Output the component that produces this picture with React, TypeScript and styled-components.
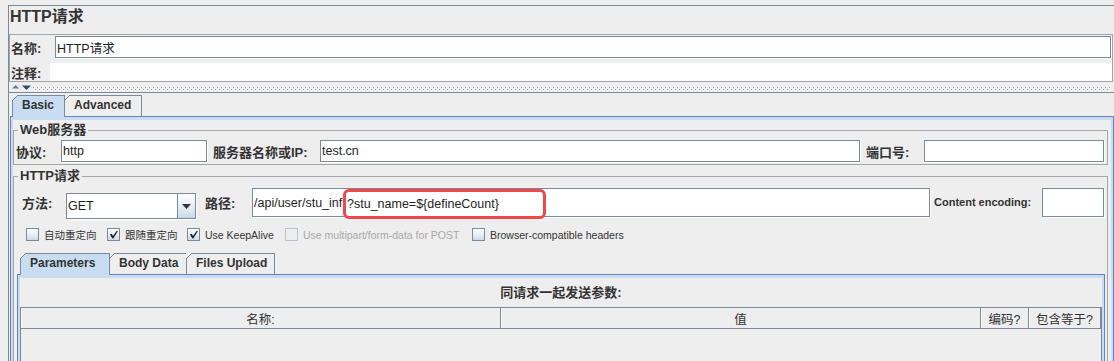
import React from "react";
import styled, { createGlobalStyle, css } from "styled-components";

const C = {
  bg: "#eeeeee",
  line: "#7a8a99",
  group: "#a6a6a6",
  blue: "#6382bf",
  band: "#c8ddf2",
  text: "#333333",
  field: "#1e1e1e",
  red: "#f0474b",
  disabled: "#a8a8a8",
};

const FONT = `"Liberation Sans", "Noto Sans CJK SC", Arial, sans-serif`;

const GlobalStyle = createGlobalStyle`
  html, body { margin: 0; padding: 0; background: ${C.bg}; }
  body { font-family: ${FONT}; color: ${C.text}; }
  *, *::before, *::after { box-sizing: border-box; }
`;

const Frame = styled.div`
  width: 1114px;
  height: 361px;
  overflow: hidden;
  padding: 5px 0 0 8px;
  display: flex;
  flex-direction: column;
`;

const Main = styled.div`
  flex: 1;
  min-height: 0;
  display: flex;
  flex-direction: column;
  border-top: 1px solid ${C.line};
  border-left: 1px solid ${C.line};
`;

const Title = styled.div`
  flex: none;
  height: 28px;
  padding: 1px 0 0 1px;
  font-size: 16px;
  line-height: 20px;
  font-weight: bold;
  color: ${C.text};
`;

const NamePanel = styled.div`
  flex: none;
  width: 1104px;
  border: 1px solid ${C.group};
  display: flex;
  flex-direction: column;
`;

const NameRow = styled.div`
  display: flex;
  align-items: center;
  padding: 1px 1px 5px 0;
`;

const CommentRow = styled.div`
  display: flex;
  align-items: center;
  height: 18px;
`;

const Label = styled.span<{ $w: number; $size?: number; $pad?: number; $ml?: number; $lh?: number }>`
  flex: none;
  width: ${(p) => p.$w}px;
  margin-left: ${(p) => p.$ml ?? 0}px;
  padding-left: ${(p) => p.$pad ?? 0}px;
  font-size: ${(p) => p.$size ?? 13}px;
  ${(p) => p.$lh && css`line-height: ${p.$lh}px;`}
  font-weight: bold;
  color: ${C.text};
  white-space: nowrap;
`;

const Field = styled.div<{ $w?: number; $h?: number }>`
  ${(p) => (p.$w ? css`width: ${p.$w}px; flex: none;` : css`flex: 1; min-width: 0;`)}
  height: ${(p) => p.$h ?? 22}px;
  display: flex;
  align-items: center;
  padding: 0 1px;
  background: #fff;
  border: 1px solid ${C.line};
  box-shadow: 1px 1px 0 #fff;
  font-size: 12.5px;
  color: ${C.field};
  white-space: nowrap;
`;

const TextArea = styled.div`
  flex: 1;
  height: 18px;
  background: #fff;
`;

const Splitter = styled.div`
  flex: none;
  width: 1104px;
  height: 10px;
  display: flex;
  align-items: flex-start;
  padding: 3px 2px 0 3px;
`;

const Bumps = styled.div`
  flex: 1;
  height: 3px;
  margin: 2px 0 0 1px;
  background:
    linear-gradient(90deg, #9ea3a8 1px, transparent 1px) 0 0 / 4px 1px repeat-x,
    linear-gradient(90deg, #9ea3a8 1px, transparent 1px) 2px 2px / 4px 1px repeat-x;
`;

const Lower = styled.div`
  flex: 1;
  min-height: 0;
  display: flex;
  flex-direction: column;
  border-top: 1px solid ${C.line};
  padding: 2px 0 0 1px;
`;

const TabPane = styled.div<{ $m?: string }>`
  flex: 1;
  min-height: 0;
  display: flex;
  flex-direction: column;
  margin: ${(p) => p.$m ?? "0"};
`;

const TabStrip = styled.div<{ $indent: number }>`
  flex: none;
  display: flex;
  height: 21px;
  padding-left: ${(p) => p.$indent}px;
`;

const Tab = styled.div<{ $active?: boolean; $w: number }>`
  position: relative;
  flex: none;
  width: ${(p) => p.$w}px;
  height: 21px;
  margin-right: -1px;
  padding-left: 9px;
  border: 1px solid ${C.line};
  border-bottom: none;
  background: ${C.bg};
  font-size: 12px;
  font-weight: bold;
  line-height: 19px;
  color: ${C.text};
  white-space: nowrap;
  ${(p) =>
    p.$active &&
    css`
      height: 22px;
      margin-bottom: -1px;
      z-index: 1;
      background: ${C.band};
    `}
  &::before {
    content: "";
    position: absolute;
    left: -1px;
    top: -1px;
    width: 7px;
    height: 7px;
    background: linear-gradient(135deg, ${C.bg} 0 3.8px, ${C.line} 3.8px 4.7px, transparent 4.7px);
  }
`;

const TabBody = styled.div`
  flex: 1;
  min-height: 0;
  display: flex;
  flex-direction: column;
  padding: 3px 2px 0 2px;
  border: 1px solid ${C.blue};
  border-bottom: none;
  box-shadow: inset 0 3px 0 ${C.band}, inset 2px 0 0 ${C.band}, inset -2px 0 0 ${C.band};
`;

const Group = styled.fieldset<{ $mt: number; $grow?: boolean }>`
  margin: ${(p) => p.$mt}px 3px 0 0;
  padding: 0;
  min-width: 0;
  border: 1px solid ${C.group};
  display: flex;
  flex-direction: column;
  ${(p) =>
    p.$grow
      ? css`
          flex: 1;
          min-height: 0;
          border-bottom: none;
        `
      : css`
          flex: none;
        `}
`;

const Legend = styled.legend`
  margin-left: 4px;
  padding: 0 2px;
  font-size: 13px;
  line-height: 16px;
  font-weight: bold;
  color: ${C.text};
`;

const ServerRow = styled.div`
  display: flex;
  align-items: center;
  padding: 2px 3px 2px 2px;
`;

const MethodRow = styled.div`
  flex: none;
  display: flex;
  align-items: flex-start;
  padding: 4px 3px 0 8px;
`;

const Combo = styled.div`
  flex: none;
  width: 130px;
  height: 26px;
  margin-top: 5px;
  display: flex;
  background: #fff;
  border: 1px solid ${C.line};
  box-shadow: 1px 1px 0 #fff;
`;

const ComboText = styled.div`
  flex: 1;
  display: flex;
  align-items: center;
  padding-left: 1px;
  font-size: 12.5px;
  color: ${C.field};
`;

const ComboButton = styled.div`
  flex: none;
  width: 18px;
  display: flex;
  align-items: center;
  justify-content: center;
  border-left: 1px solid ${C.line};
  background: linear-gradient(180deg, #ffffff 0%, #e4ecf4 55%, #cad8e6 100%);
`;

const PathText = styled.span`
  flex: none;
  width: 89px;
`;

const Highlight = styled.span`
  position: relative;
  align-self: flex-start;
  flex: none;
  width: 203px;
  height: 30px;
  display: flex;
  align-items: center;
  padding-left: 1px;
  border: 3px solid ${C.red};
  border-radius: 6px;
  background: #fff;
`;

const OptionRow = styled.div`
  flex: none;
  display: flex;
  align-items: center;
  height: 13px;
  margin-top: 9px;
  padding-left: 12px;
`;

const Option = styled.span<{ $w?: number; $disabled?: boolean }>`
  display: flex;
  align-items: center;
  gap: 5px;
  ${(p) => p.$w && css`width: ${p.$w}px; flex: none;`}
  font-size: 10.5px;
  color: ${(p) => (p.$disabled ? C.disabled : C.text)};
  white-space: nowrap;
`;

const Box = styled.span<{ $disabled?: boolean }>`
  flex: none;
  width: 13px;
  height: 13px;
  display: flex;
  align-items: center;
  justify-content: center;
  border: 1px solid ${(p) => (p.$disabled ? "#b9c3cd" : C.line)};
  background: ${(p) =>
    p.$disabled ? C.bg : "linear-gradient(180deg, #ffffff 0%, #e6edf5 55%, #cdd9e6 100%)"};
`;

const ParamTitle = styled.div`
  flex: none;
  height: 29px;
  line-height: 29px;
  text-align: center;
  font-size: 13px;
  font-weight: bold;
  color: ${C.text};
`;

const Table = styled.div`
  flex: 1;
  min-height: 0;
  border: 1px solid ${C.line};
  border-bottom: none;
`;

const HeaderRow = styled.div`
  display: grid;
  grid-template-columns: 480px 480px 48px 1fr;
  height: 21px;
  border-bottom: 1px solid ${C.line};
`;

const HeaderCell = styled.div`
  display: flex;
  align-items: center;
  justify-content: center;
  border-right: 1px solid ${C.line};
  box-shadow: inset 1px 0 0 #fff;
  font-size: 12.5px;
  color: ${C.text};
  white-space: nowrap;
`;

const SplitArrows = () => (
  <svg width="20" height="5" viewBox="0 0 20 5">
    <polygon points="0,3.6 3.6,0 7.2,3.6" fill="#5f7fa6" />
    <polygon points="10,0.5 19,0.5 14.5,5" fill="#2e4a78" />
  </svg>
);

const DownTriangle = () => (
  <svg width="9" height="5" viewBox="0 0 9 5">
    <polygon points="0,0 9,0 4.5,5" fill="#333" />
  </svg>
);

const Check = () => (
  <svg width="9" height="9" viewBox="0 0 9 9">
    <polygon points="0.8,4.4 2.9,3.8 4,6 7.9,0.6 8.8,1.2 4.3,8.4 3.5,8.4" fill="#222" />
  </svg>
);

type OptionProps = { label: string; checked?: boolean; disabled?: boolean; w?: number };

const CheckOption = ({ label, checked, disabled, w }: OptionProps) => (
  <Option $w={w} $disabled={disabled}>
    <Box $disabled={disabled}>{checked && <Check />}</Box>
    {label}
  </Option>
);

export default function App() {
  return (
    <>
      <GlobalStyle />
      <Frame>
        <Main>
          <Title>HTTP请求</Title>
          <NamePanel>
            <NameRow>
              <Label $w={45} $pad={1}>
                名称:
              </Label>
              <Field>HTTP请求</Field>
            </NameRow>
            <CommentRow>
              <Label $w={40} $pad={1}>
                注释:
              </Label>
              <TextArea />
            </CommentRow>
          </NamePanel>
          <Splitter>
            <SplitArrows />
            <Bumps />
          </Splitter>
          <Lower>
            <TabPane>
              <TabStrip $indent={2}>
                <Tab $active $w={53}>
                  Basic
                </Tab>
                <Tab $w={78}>Advanced</Tab>
              </TabStrip>
              <TabBody>
                <Group $mt={2}>
                  <Legend>Web服务器</Legend>
                  <ServerRow>
                    <Label $w={45}>协议:</Label>
                    <Field $w={146}>http</Field>
                    <Label $w={107} $ml={6}>
                      服务器名称或IP:
                    </Label>
                    <Field>test.cn</Field>
                    <Label $w={58} $ml={6}>
                      端口号:
                    </Label>
                    <Field $w={180} />
                  </ServerRow>
                </Group>
                <Group $mt={3} $grow>
                  <Legend>HTTP请求</Legend>
                  <MethodRow>
                    <Label $w={44} $lh={31}>
                      方法:
                    </Label>
                    <Combo>
                      <ComboText>GET</ComboText>
                      <ComboButton>
                        <DownTriangle />
                      </ComboButton>
                    </Combo>
                    <Label $w={47} $ml={9} $lh={31}>
                      路径:
                    </Label>
                    <Field $h={29}>
                      <PathText>/api/user/stu_inf</PathText>
                      <Highlight>{"?stu_name=${defineCount}"}</Highlight>
                    </Field>
                    <Label $w={108} $ml={4} $lh={29} $size={11}>
                      Content encoding:
                    </Label>
                    <Field $w={62} $h={29} />
                  </MethodRow>
                  <OptionRow>
                    <CheckOption w={81} label="自动重定向" />
                    <CheckOption w={80} label="跟随重定向" checked />
                    <CheckOption w={98} label="Use KeepAlive" checked />
                    <CheckOption w={187} label="Use multipart/form-data for POST" disabled />
                    <CheckOption label="Browser-compatible headers" />
                  </OptionRow>
                  <TabPane $m="12px 2px 0 3px">
                    <TabStrip $indent={3}>
                      <Tab $active $w={90}>
                        Parameters
                      </Tab>
                      <Tab $w={78}>Body Data</Tab>
                      <Tab $w={89}>Files Upload</Tab>
                    </TabStrip>
                    <TabBody>
                      <ParamTitle>同请求一起发送参数:</ParamTitle>
                      <Table>
                        <HeaderRow>
                          <HeaderCell>名称:</HeaderCell>
                          <HeaderCell>值</HeaderCell>
                          <HeaderCell>编码?</HeaderCell>
                          <HeaderCell>包含等于?</HeaderCell>
                        </HeaderRow>
                      </Table>
                    </TabBody>
                  </TabPane>
                </Group>
              </TabBody>
            </TabPane>
          </Lower>
        </Main>
      </Frame>
    </>
  );
}
